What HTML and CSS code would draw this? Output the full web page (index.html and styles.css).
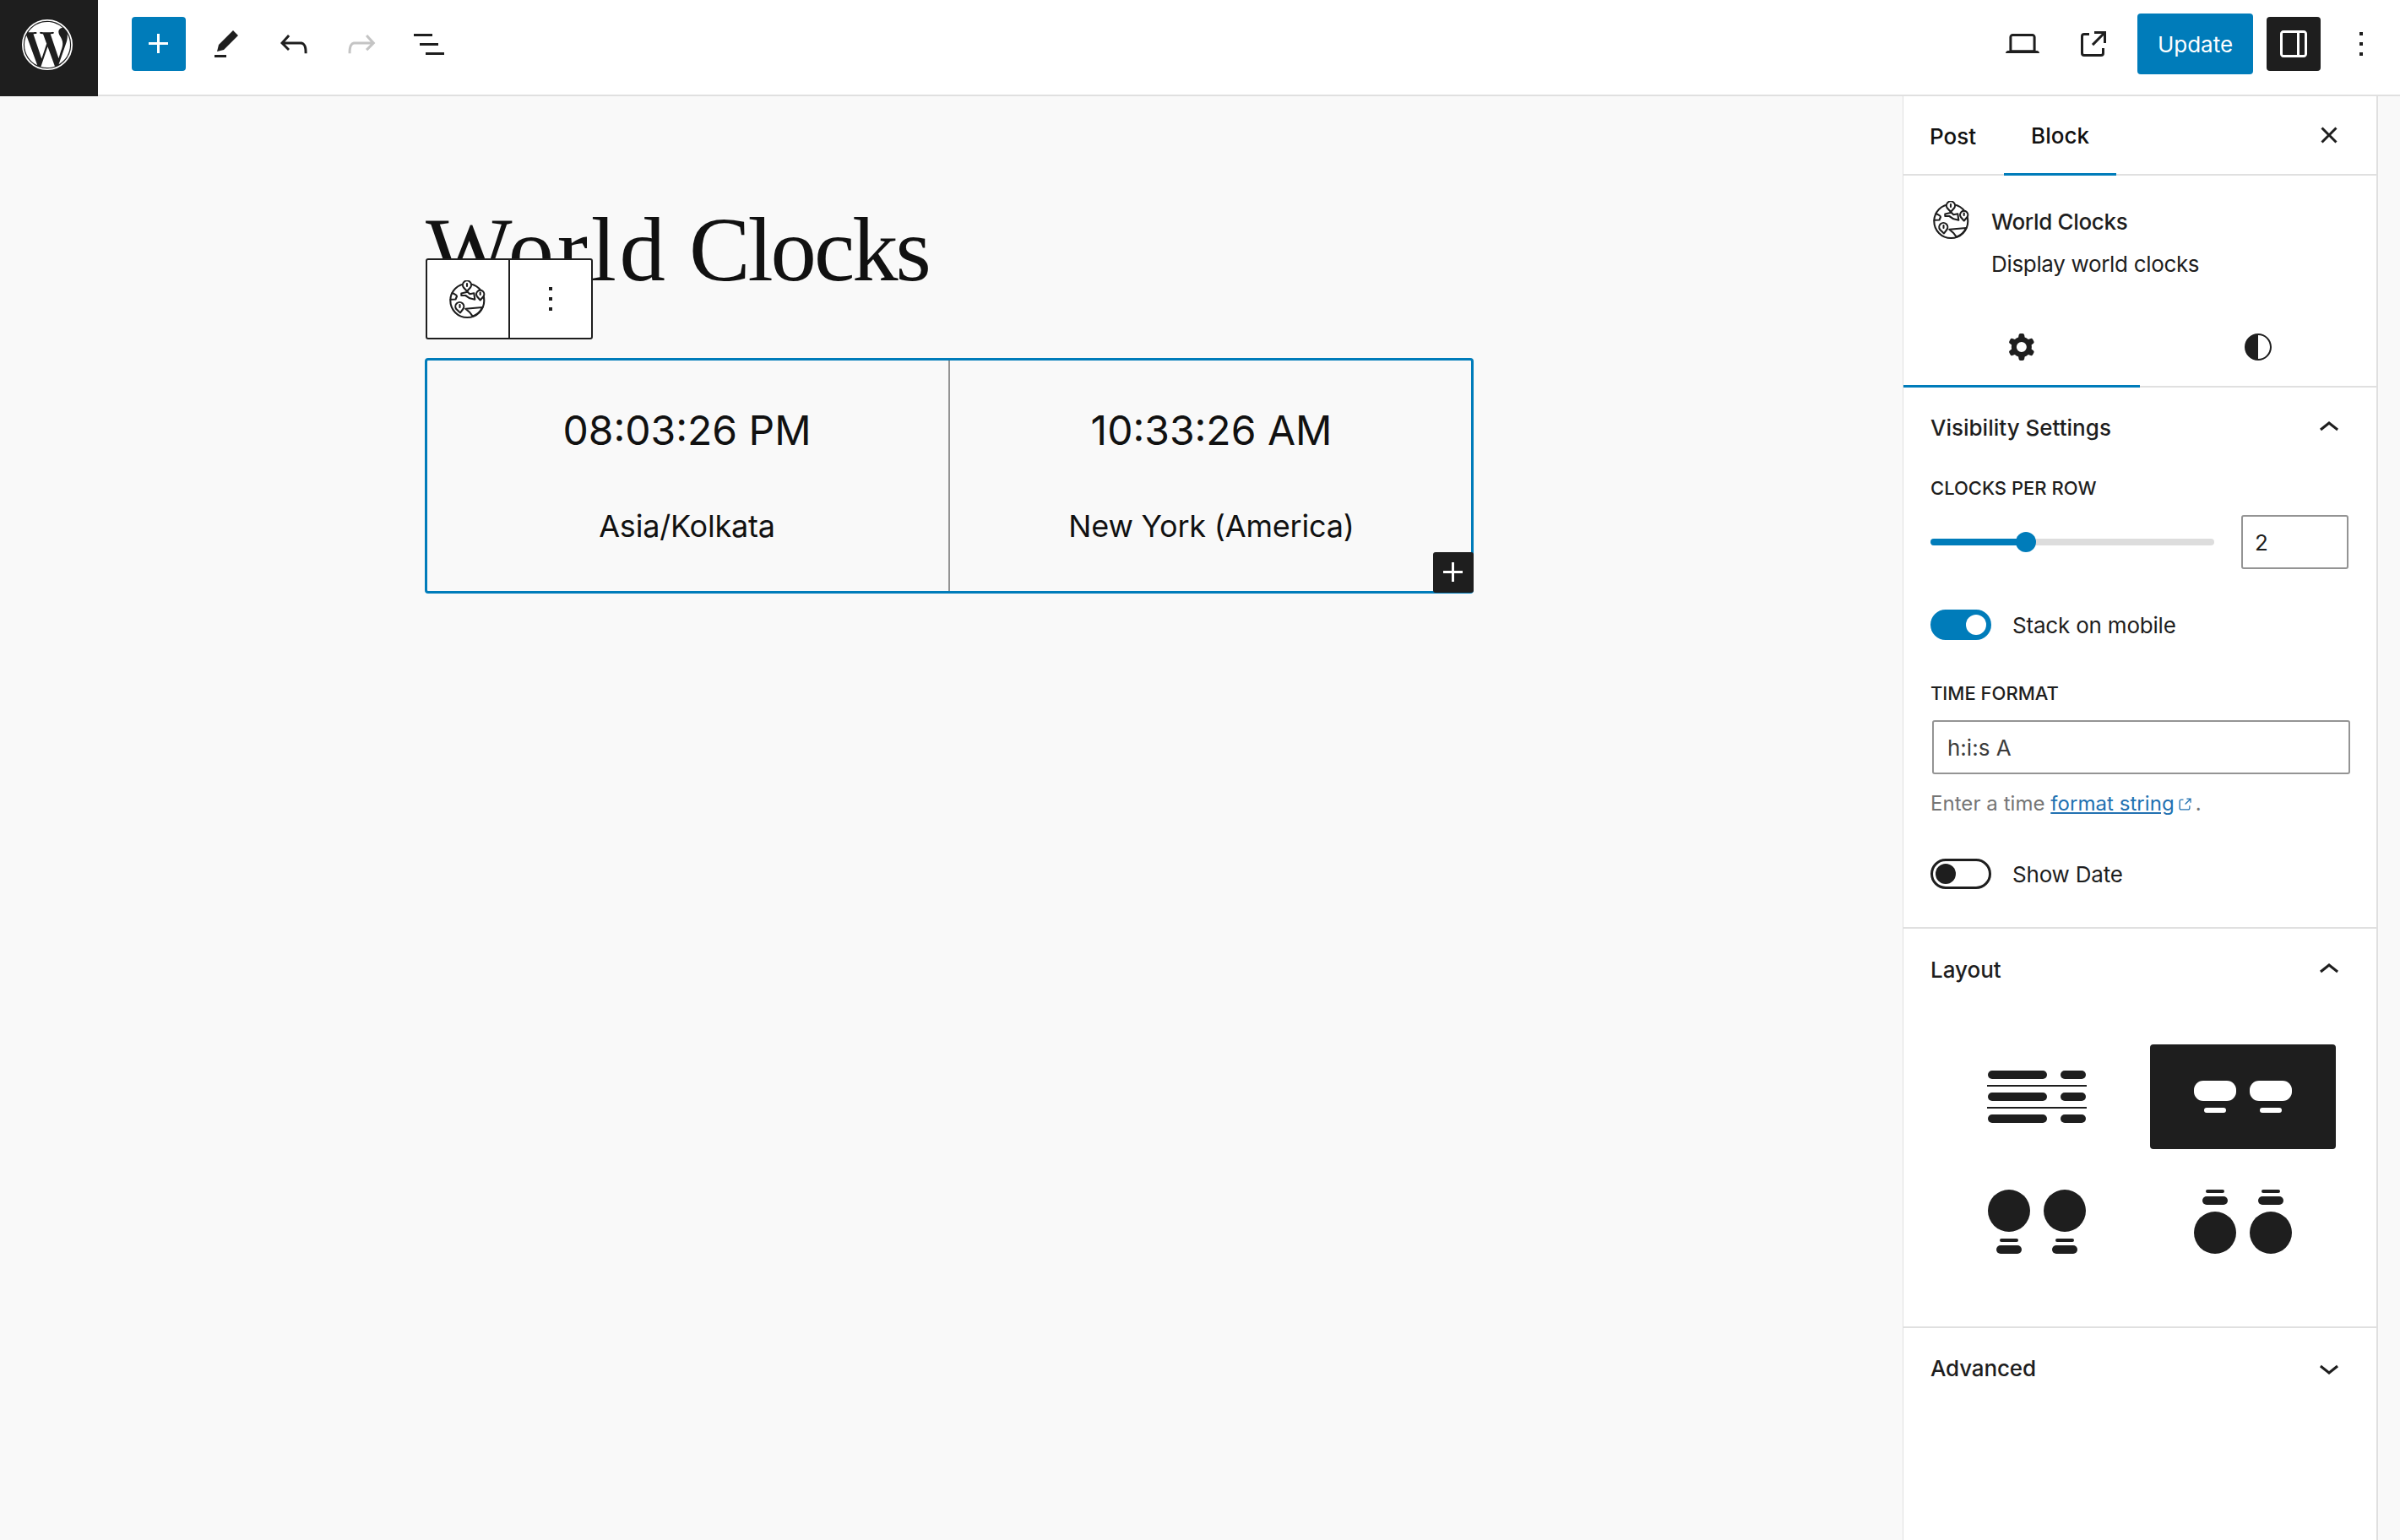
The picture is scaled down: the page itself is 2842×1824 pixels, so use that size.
FILE: index.html
```html
<!DOCTYPE html>
<html lang="en">
<head>
<meta charset="utf-8">
<title>World Clocks</title>
<link rel="stylesheet" href="styles.css">
</head>
<body>
<svg class="defs" aria-hidden="true">
  <symbol id="globe" viewBox="0 0 46 46">
    <g fill="none" stroke="currentColor" stroke-width="2.1" stroke-linejoin="round" stroke-linecap="round">
      <circle cx="22.300" cy="24" r="20"/>
      <path d="M22 13l-4-4.500a5 5 0 1 1 8 0z" fill="#fff"/>
      <path d="M22 4v3"/>
      <path d="M37.700 23.500l-3.700-4.300a4.600 4.600 0 1 1 7.400 0z" fill="#fff"/>
      <path d="M37.700 14.500v2.500"/>
      <path d="M14 38.500l-4.700-4.500a5 5 0 1 1 8 0z" fill="#fff"/>
      <path d="M13.500 29v3"/>
      <path d="M15.300 15.500l7.400-1.800 2.600 2.600 5-1 1 7.400-6-1.400-5-3.300h-5z"/>
      <path d="M4.500 15c3 1.500 5.500 2.500 5.500 4l-1.500 3.500-6 .3"/>
      <path d="M20.300 33.700l20-1.700c-2 4.500-6 8.500-11.600 10.700L25.300 38z"/>
    </g>
  </symbol>
  <symbol id="plus" viewBox="0 0 24 24"><path d="M11 12.500V17.500H12.500V12.500H17.500V11H12.500V6H11V11H6V12.500H11Z"/></symbol>
  <symbol id="dots" viewBox="0 0 24 24"><path d="M13 19h-2v-2h2v2zm0-6h-2v-2h2v2zm0-6h-2V5h2v2z"/></symbol>
  <symbol id="chev-up" viewBox="0 0 24 24"><path d="M6.500 12.400L12 8l5.500 4.400-.9 1.200L12 10l-4.500 3.600-1-1.200z"/></symbol>
  <symbol id="chev-down" viewBox="0 0 24 24"><path d="M17.500 11.600L12 16l-5.500-4.400.9-1.200L12 14l4.500-3.600 1 1.200z"/></symbol>
</svg>

<div class="app">
  <header class="topbar">
    <a class="logo" href="#" aria-label="WordPress">
      <svg class="logo-mark" viewBox="0 0 24 24" fill="#fff">
        <path d="M12.158 12.786l-2.698 7.840c.806.236 1.657.365 2.540.365 1.047 0 2.050-.18 2.986-.51-.024-.037-.046-.078-.065-.123l-2.762-7.570zM3.008 12c0 3.560 2.070 6.634 5.068 8.092L3.788 8.342c-.5 1.117-.78 2.354-.78 3.658zm15.060-.454c0-1.112-.398-1.880-.74-2.480-.456-.74-.883-1.368-.883-2.110 0-.825.627-1.595 1.510-1.595.04 0 .078.006.116.008-1.598-1.464-3.730-2.360-6.070-2.360-3.140 0-5.904 1.613-7.512 4.053.21.008.41.012.58.012.94 0 2.395-.114 2.395-.114.484-.028.54.684.057.74 0 0-.487.058-1.030.086l3.275 9.740 1.968-5.902-1.400-3.838c-.485-.028-.944-.085-.944-.085-.486-.03-.43-.77.056-.742 0 0 1.484.114 2.368.114.94 0 2.397-.114 2.397-.114.486-.028.543.684.058.74 0 0-.488.058-1.030.086l3.250 9.665.897-2.997c.456-1.170.684-2.137.684-2.907zm1.820-3.860c.04.286.06.593.06.924 0 .912-.17 1.938-.683 3.220l-2.746 7.940c2.672-1.558 4.470-4.454 4.470-7.770 0-1.564-.4-3.033-1.100-4.314z"/>
        <circle cx="12" cy="12" r="9.700" fill="none" stroke="#fff" stroke-width=".6"/>
      </svg>
    </a>
    <div class="tools">
      <button class="icon-btn primary" aria-label="Add block"><svg class="icon"><use href="#plus"/></svg></button>
      <button class="icon-btn" aria-label="Tools"><svg class="icon" viewBox="0 0 24 24"><path d="m19 7-3-3-8.500 8.500-1 4 4-1L19 7Zm-7 11.500H5V20h7v-1.500Z"/></svg></button>
      <button class="icon-btn" aria-label="Undo"><svg class="icon" viewBox="0 0 24 24"><path d="M18.300 11.700c-.6-.6-1.400-.9-2.300-.9H6.700l2.900-3.300-1.100-1-4.500 5L8.500 16l1-1-2.700-2.700H16c.5 0 .9.2 1.300.5 1 1 1 3.400 1 4.500v.3h1.500v-.2c0-1.500 0-4.300-1.500-5.700z"/></svg></button>
      <button class="icon-btn disabled" aria-label="Redo"><svg class="icon" viewBox="0 0 24 24"><path d="M15.600 6.500l-1.100 1 2.900 3.300H8c-.9 0-1.700.3-2.300.9-1.400 1.500-1.400 4.200-1.400 5.700v.2h1.500v-.3c0-1.100 0-3.500 1-4.500.3-.3.7-.5 1.300-.5h9.200L14.500 15l1.100 1.100 4.600-4.600-4.600-5z"/></svg></button>
      <button class="icon-btn" aria-label="List view"><svg class="icon" viewBox="0 0 24 24"><path d="M3 6h11v1.500H3V6Zm3.500 5.500h11V13h-11v-1.500ZM21 17H10v1.500h11V17Z"/></svg></button>
    </div>
    <div class="actions">
      <button class="icon-btn" aria-label="Preview"><svg class="icon" viewBox="0 0 24 24"><path d="M20.500 16h-.7V8c0-1.100-.9-2-2-2H6.200c-1.100 0-2 .9-2 2v8h-.7c-.8 0-1.500.7-1.500 1.500h20c0-.8-.7-1.500-1.500-1.500zM5.700 8c0-.3.2-.5.5-.5h11.600c.3 0 .5.2.5.5v7.600H5.700V8z"/></svg></button>
      <button class="icon-btn" aria-label="View post"><svg class="icon" viewBox="0 0 24 24"><path d="M19.500 4.500h-7V6h4.440l-5.970 6.030 1.060 1.060L18 7.060v4.440h1.500v-7Zm-13 1a2 2 0 0 0-2 2v10a2 2 0 0 0 2 2h10a2 2 0 0 0 2-2v-3H17v3a.5.5 0 0 1-.5.5h-10a.5.5 0 0 1-.5-.5v-10a.5.5 0 0 1 .5-.5h3V5.500h-3Z"/></svg></button>
      <button class="update">Update</button>
      <button class="icon-btn dark" aria-label="Settings"><svg class="icon" viewBox="0 0 24 24"><path d="M18 4H6c-1.100 0-2 .9-2 2v12c0 1.100.9 2 2 2h12c1.100 0 2-.9 2-2V6c0-1.100-.9-2-2-2zM6 18.500c-.3 0-.5-.2-.5-.5V6c0-.3.2-.5.5-.5h8v13H6zm12.500-.5c0 .3-.2.5-.5.5h-2.500v-13H18c.3 0 .5.2.5.5v12z"/></svg></button>
      <button class="icon-btn" aria-label="Options"><svg class="icon"><use href="#dots"/></svg></button>
    </div>
  </header>

  <div class="workspace">
    <main class="canvas">
      <h1 class="post-title"><span class="title-first">World</span> <span class="title-second">Clocks</span></h1>
      <div class="block-toolbar">
        <button class="tb-btn" aria-label="World Clocks"><svg class="globe"><use href="#globe"/></svg></button>
        <button class="tb-btn" aria-label="Options"><svg class="icon"><use href="#dots"/></svg></button>
      </div>
      <section class="clocks">
        <div class="clock">
          <div class="clock-time">08:03:26 PM</div>
          <div class="clock-name">Asia/Kolkata</div>
        </div>
        <div class="clock">
          <div class="clock-time">10:33:26 AM</div>
          <div class="clock-name">New York (America)</div>
        </div>
        <button class="appender" aria-label="Add block"><svg class="appender-icon"><use href="#plus"/></svg></button>
      </section>
    </main>

    <aside class="sidebar">
      <div class="side-tabs">
        <button class="side-tab">Post</button>
        <button class="side-tab active">Block</button>
        <button class="icon-btn close" aria-label="Close"><svg class="icon" viewBox="0 0 24 24"><path d="M12 13.060l3.712 3.713 1.061-1.060L13.061 12l3.712-3.712-1.060-1.060L12 10.938 8.288 7.227l-1.061 1.060L10.939 12l-3.712 3.712 1.060 1.061L12 13.061z"/></svg></button>
      </div>

      <div class="block-card">
        <svg class="globe"><use href="#globe"/></svg>
        <div class="card-text">
          <div class="card-title">World Clocks</div>
          <div class="card-desc">Display world clocks</div>
        </div>
      </div>

      <div class="style-tabs">
        <button class="style-tab active" aria-label="Settings"><svg class="icon" viewBox="0 0 24 24"><path fill-rule="evenodd" d="M10.289 4.836A1 1 0 0 1 11.275 4h1.306a1 1 0 0 1 .987.836l.244 1.466c.787.26 1.503.679 2.108 1.218l1.393-.522a1 1 0 0 1 1.216.437l.653 1.130a1 1 0 0 1-.23 1.273l-1.148.944a6.025 6.025 0 0 1 0 2.435l1.149.946a1 1 0 0 1 .23 1.272l-.653 1.130a1 1 0 0 1-1.216.437l-1.394-.522c-.605.54-1.320.958-2.108 1.218l-.244 1.466a1 1 0 0 1-.987.836h-1.306a1 1 0 0 1-.986-.836l-.244-1.466a5.995 5.995 0 0 1-2.108-1.218l-1.394.522a1 1 0 0 1-1.217-.436l-.653-1.131a1 1 0 0 1 .23-1.272l1.149-.946a6.026 6.026 0 0 1 0-2.435l-1.148-.944a1 1 0 0 1-.23-1.272l.653-1.131a1 1 0 0 1 1.217-.437l1.393.522a5.994 5.994 0 0 1 2.108-1.218l.244-1.466ZM14.929 12a3 3 0 1 1-6 0 3 3 0 0 1 6 0Z"/></svg></button>
        <button class="style-tab" aria-label="Styles"><svg class="icon" viewBox="0 0 24 24"><path fill-rule="evenodd" d="M12 4c-4.400 0-8 3.600-8 8s3.600 8 8 8 8-3.600 8-8-3.600-8-8-8zm0 15V5c3.900 0 7 3.100 7 7s-3.100 7-7 7z"/></svg></button>
      </div>

      <section class="panel panel-visibility">
        <div class="panel-head"><span>Visibility Settings</span><svg class="icon"><use href="#chev-up"/></svg></div>
        <div class="label label-clocks">Clocks per row</div>
        <div class="range-row">
          <div class="track"><div class="track-fill"></div><div class="thumb"></div></div>
          <input class="field field-num" type="text" value="2" aria-label="Clocks per row">
        </div>
        <div class="toggle-row toggle-stack"><span class="toggle on"></span><span class="toggle-text">Stack on mobile</span></div>
        <div class="label label-format">Time format</div>
        <input class="field field-wide" type="text" value="h:i:s A" aria-label="Time format">
        <p class="help">Enter a time <a href="#">format string</a><svg class="ext" viewBox="0 0 24 24"><path d="M18.200 17c0 .7-.6 1.200-1.200 1.200H7c-.7 0-1.200-.6-1.200-1.200V7c0-.7.6-1.200 1.200-1.200h3.200V4.200H7C5.500 4.200 4.200 5.500 4.200 7v10c0 1.500 1.200 2.800 2.800 2.800h10c1.500 0 2.800-1.200 2.800-2.800v-3.600h-1.500V17zM14.900 3v1.500h3.700l-6.400 6.400 1.100 1.100 6.400-6.400v3.700h1.500V3h-6.300z"/></svg><span class="dot">.</span></p>
        <div class="toggle-row toggle-date"><span class="toggle"></span><span class="toggle-text">Show Date</span></div>
      </section>

      <section class="panel panel-layout">
        <div class="panel-head"><span>Layout</span><svg class="icon"><use href="#chev-up"/></svg></div>
        <div class="layout-grid">
          <button class="layout-opt" aria-label="List">
            <svg class="layout-icon" viewBox="0 0 120 80">
              <rect x="2" y="9" width="70" height="10" rx="5"/><rect x="88" y="9" width="30" height="10" rx="5"/>
              <rect x="1" y="26" width="118" height="2"/>
              <rect x="2" y="35" width="70" height="10" rx="5"/><rect x="88" y="35" width="30" height="10" rx="5"/>
              <rect x="1" y="52" width="118" height="2"/>
              <rect x="2" y="61" width="70" height="10" rx="5"/><rect x="88" y="61" width="30" height="10" rx="5"/>
            </svg>
          </button>
          <button class="layout-opt selected" aria-label="Cards">
            <svg class="layout-icon" viewBox="0 0 120 80">
              <rect x="2" y="21" width="50" height="24" rx="11"/><rect x="68" y="21" width="50" height="24" rx="11"/>
              <rect x="14" y="53" width="26" height="6" rx="3"/><rect x="80" y="53" width="26" height="6" rx="3"/>
            </svg>
          </button>
          <button class="layout-opt" aria-label="Circle, label below">
            <svg class="layout-icon" viewBox="0 0 120 80">
              <circle cx="27" cy="27" r="25"/><circle cx="93" cy="27" r="25"/>
              <rect x="16" y="60" width="22" height="4" rx="2"/><rect x="82" y="60" width="22" height="4" rx="2"/>
              <rect x="12" y="68" width="30" height="10" rx="5"/><rect x="78" y="68" width="30" height="10" rx="5"/>
            </svg>
          </button>
          <button class="layout-opt" aria-label="Circle, label above">
            <svg class="layout-icon" viewBox="0 0 120 80">
              <rect x="16" y="2" width="22" height="4" rx="2"/><rect x="82" y="2" width="22" height="4" rx="2"/>
              <rect x="12" y="10" width="30" height="10" rx="5"/><rect x="78" y="10" width="30" height="10" rx="5"/>
              <circle cx="27" cy="53" r="25"/><circle cx="93" cy="53" r="25"/>
            </svg>
          </button>
        </div>
      </section>

      <section class="panel panel-advanced">
        <div class="panel-head"><span>Advanced</span><svg class="icon"><use href="#chev-down"/></svg></div>
      </section>
    </aside>
    <div class="gutter"></div>
  </div>
</div>
</body>
</html>
```

FILE: styles.css
```css
* { box-sizing: border-box; }
html, body { margin: 0; padding: 0; }
body {
  width: 2842px;
  height: 1824px;
  overflow: hidden;
  background: #f9f9f9;
  color: #1e1e1e;
  font-family: Inter, "Liberation Sans", sans-serif;
  font-size: 26px;
  line-height: 32px;
}
button { font: inherit; color: inherit; background: none; border: 0; padding: 0; margin: 0; }
.defs { position: absolute; width: 0; height: 0; overflow: hidden; }

.app { display: flex; flex-direction: column; height: 1824px; }

/* top bar */
.topbar {
  display: flex;
  align-items: center;
  height: 114px;
  flex: none;
  background: #fff;
  border-bottom: 2px solid #e0e0e0;
}
.logo {
  width: 116px;
  height: 114px;
  margin-bottom: -2px;
  flex: none;
  background: #1e1e1e;
  display: flex;
  padding: 17px 0 0 20px;
}
.logo-mark { width: 72px; height: 72px; }
.tools { display: flex; gap: 16px; margin: 0 0 8px 40px; }
.actions { display: flex; align-items: center; margin: 0 0 8px auto; padding-right: 14px; gap: 16px; }
.icon-btn {
  width: 64px;
  height: 64px;
  flex: none;
  display: flex;
  align-items: center;
  justify-content: center;
  border-radius: 4px;
}
.icon { width: 48px; height: 48px; fill: currentColor; flex: none; display: block; }
.primary { background: #007cba; color: #fff; }
.dark { background: #1e1e1e; color: #fff; }
.disabled { color: #c4c4c4; }
.actions .icon-btn:first-child { margin-right: 4px; }
.actions .icon-btn:nth-child(2) { margin-right: 4px; }
.update {
  width: 137px;
  height: 72px;
  padding-top: 1px;
  background: #007cba;
  color: #fff;
  border-radius: 4px;
  font-weight: 400;
}

/* workspace */
.workspace { flex: 1; display: flex; min-height: 0; }
.canvas { flex: 1; position: relative; padding: 128px 0 0 503px; background: #f9f9f9; min-width: 0; }
.post-title {
  margin: 0 0 0 1px;
  font: 400 108.7px/108px "Liberation Serif", serif;
  color: #111;
  word-spacing: -3px;
}
.title-first { letter-spacing: 3.75px; }
.title-second { letter-spacing: -3px; }
.block-toolbar {
  position: absolute;
  left: 504px;
  top: 192px;
  display: flex;
  width: 198px;
  height: 96px;
  background: #fff;
  border: 2px solid #1e1e1e;
  border-radius: 3px;
}
.tb-btn { flex: 1; display: flex; align-items: center; justify-content: center; }
.tb-btn:first-child { border-right: 2px solid #1e1e1e; padding-top: 1px; }
.globe { width: 46px; height: 46px; color: #1e1e1e; flex: none; display: block; }

.clocks {
  position: relative;
  display: grid;
  grid-template-columns: 619px 1fr;
  width: 1242px;
  height: 279px;
  margin-top: 74px;
  border: 3px solid #007cba;
  border-radius: 4px;
  color: #111;
  text-align: center;
}
.clock { padding-top: 53px; }
.clock:first-child { border-right: 2px solid #949494; padding-right: 2px; }
.clock:nth-child(2) { padding-left: 2px; }
.clock-time { font-size: 48px; line-height: 60px; }
.clock-name { font-size: 36px; line-height: 44px; margin-top: 61px; letter-spacing: -.2px; }
.appender {
  position: absolute;
  right: -3px;
  bottom: -2px;
  width: 48px;
  height: 48px;
  display: flex;
  align-items: center;
  justify-content: center;
  background: #1e1e1e;
  border-radius: 3px;
}
.appender-icon { width: 48px; height: 48px; fill: #fff; display: block; }

/* sidebar */
.sidebar {
  width: 563px;
  flex: none;
  background: #fff;
  border-left: 1px solid #e0e0e0;
  border-right: 2px solid #e0e0e0;
  display: flex;
  flex-direction: column;
}
.gutter { width: 26px; flex: none; background: #f9f9f9; }

.side-tabs {
  display: flex;
  align-items: stretch;
  height: 94px;
  flex: none;
  border-bottom: 2px solid #e0e0e0;
}
.side-tab { width: 119px; font-weight: 500; height: 94px; color: #111; padding-top: 2px; }
.side-tab:first-child { text-align: left; padding-left: 31px; }
.side-tab.active { width: 133px; border-bottom: 3px solid #007cba; }
.close { margin: 22px 32px 0 auto; width: 48px; height: 48px; }

.block-card { display: flex; padding: 30px 0 0 34px; height: 157px; flex: none; }
.card-text { margin-left: 24px; padding-top: 9px; letter-spacing: -.33px; }
.card-title { font-weight: 500; }
.card-desc { margin-top: 18px; }

.style-tabs { display: flex; height: 94px; flex: none; border-bottom: 2px solid #e0e0e0; }
.style-tab { width: 280px; height: 94px; display: flex; align-items: center; justify-content: center; padding-bottom: 2px; }
.style-tab.active { border-bottom: 3px solid #007cba; padding-bottom: 0; }

.panel { flex: none; padding: 24px 32px 0; border-bottom: 2px solid #e0e0e0; }
.panel-head { display: flex; align-items: center; justify-content: space-between; height: 48px; font-weight: 500; }
.panel-visibility { height: 641px; }
.panel-layout { height: 473px; padding-top: 25px; }
.panel-advanced { padding-top: 23px; border-bottom: 0; flex: 1; }
.panel-advanced span { padding-top: 1px; letter-spacing: -.15px; }

.label { font-size: 22px; line-height: 28px; font-weight: 500; text-transform: uppercase; }
.label-clocks { margin-top: 33px; }
.range-row { display: flex; align-items: center; margin: 18px 1px 0 0; height: 64px; justify-content: space-between; }
.track { position: relative; width: 336px; height: 8px; background: #ddd; border-radius: 4px; }
.track-fill { width: 113px; height: 8px; background: #007cba; border-radius: 4px; }
.thumb { position: absolute; left: 101px; top: -8px; width: 24px; height: 24px; border-radius: 50%; background: #007cba; }
.field {
  display: block;
  height: 64px;
  border: 2px solid #949494;
  border-radius: 3px;
  background: #fff;
  color: #1e1e1e;
  font: inherit;
  outline: 0;
}
.field-num { width: 127px; padding: 0 14px; }
.field-wide { width: 495px; margin: 18px 0 0 2px; padding: 0 16px; color: #3c3c3c; }
.toggle-row { display: flex; align-items: center; gap: 25px; height: 36px; }
.toggle-text { padding-top: 1px; letter-spacing: -.2px; }
.toggle-stack { margin-top: 48px; }
.label-format { margin-top: 49px; }
.toggle {
  position: relative;
  width: 72px;
  height: 36px;
  border-radius: 18px;
  border: 3px solid #1e1e1e;
  background: #fff;
  flex: none;
}
.toggle::after {
  content: "";
  position: absolute;
  left: 3px;
  top: 3px;
  width: 24px;
  height: 24px;
  border-radius: 50%;
  background: #1e1e1e;
}
.toggle.on { background: #007cba; border-color: #007cba; }
.toggle.on::after { left: 39px; background: #fff; }
.help { margin: 19px 0 0; font-size: 24px; line-height: 32px; color: #757575; letter-spacing: .05px; }
.help a { color: #2271b1; }
.ext { width: 20px; height: 20px; fill: #2271b1; margin-left: 2px; vertical-align: -3px; }
.dot { margin-left: 3px; }
.toggle-date { margin-top: 49px; }

.layout-grid {
  display: grid;
  grid-template-columns: 220px 220px;
  grid-auto-rows: 124px;
  gap: 24px;
  margin: 64px 0 0 16px;
}
.layout-opt { display: flex; align-items: center; justify-content: center; border-radius: 4px; fill: #1e1e1e; }
.layout-opt.selected { background: #1e1e1e; fill: #fff; }
.layout-icon { width: 120px; height: 80px; display: block; }
```
